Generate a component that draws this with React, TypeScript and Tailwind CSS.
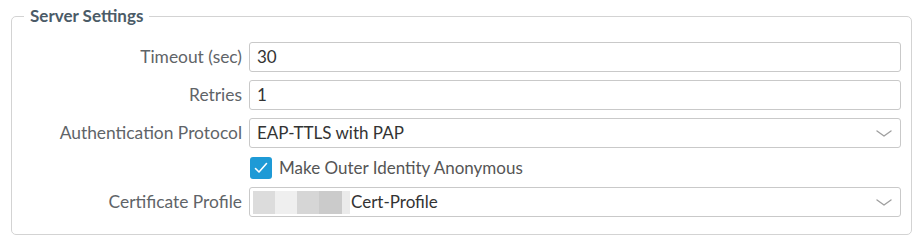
import React from "react";

const font = "font-['Lato','Open_Sans',sans-serif]";

function Chevron() {
    return (
        <svg width="16" height="7" viewBox="0 0 16 7" fill="none">
            <polyline points="1,1 8,6 15,1" stroke="#a0a0a0" strokeWidth="1.4" strokeLinecap="round" strokeLinejoin="round" />
        </svg>
    );
}

function Label({ children }: { children: React.ReactNode }) {
    return <div className="flex items-center justify-end text-[17.4px] text-[#5f6468]">{children}</div>;
}

function TextInput({ value }: { value: string }) {
    return (
        <div className="h-[30px] flex items-center px-[7px] border border-[#c9c9c9] rounded-[3px] bg-white text-[17px] text-[#333]">
            {value}
        </div>
    );
}

function Select({ children }: { children: React.ReactNode }) {
    return (
        <div className="h-[30px] flex items-stretch border border-[#c9c9c9] rounded-[3px] bg-white text-[17px] text-[#333]">
            <div className="flex-1 flex items-center">{children}</div>
            <div className="w-[33px] flex items-center justify-center">
                <Chevron />
            </div>
        </div>
    );
}

export default function App() {
    return (
        <div className={`w-[919px] h-[244px] bg-white pt-[6px] pl-[11px] ${font}`}>
            <fieldset className="w-[901px] h-[229px] border border-[#d3d3d3] rounded-[5px] pt-4 pr-[10px]">
                <legend className="ml-[12px] px-[6px] text-[17px] leading-[20px] font-bold text-[#4b5b67]">
                    Server Settings
                </legend>

                <div className="grid grid-cols-[230px_1fr] gap-x-[7px] gap-y-2">
                    <Label>Timeout (sec)</Label>
                    <TextInput value="30" />

                    <Label>Retries</Label>
                    <TextInput value="1" />

                    <Label>Authentication Protocol</Label>
                    <Select>
                        <span className="pl-[7px]">EAP-TTLS with PAP</span>
                    </Select>

                    <div />
                    <div className="h-[23px] flex items-end gap-[7px] pl-px">
                        <span className="w-[22px] h-[22px] rounded-[3px] bg-[#1e9ad6] flex items-center justify-center">
                            <svg width="14" height="12" viewBox="0 0 14 12" fill="none">
                                <polyline points="1.5,6.5 5,10 12.5,1.5" stroke="#fff" strokeWidth="1.6" strokeLinecap="round" strokeLinejoin="round" />
                            </svg>
                        </span>
                        <span className="text-[17px] text-[#555] leading-[22px]">Make Outer Identity Anonymous</span>
                    </div>

                    <Label>Certificate Profile</Label>
                    <Select>
                        {/* redacted prefix */}
                        <div className="flex h-[23px] ml-[3px]">
                            <span className="w-[22px] bg-[#dcdcdc]" />
                            <span className="w-[22px] bg-[#efefef]" />
                            <span className="w-[22px] bg-[#d6d6d6]" />
                            <span className="w-[23px] bg-[#cbcbcb]" />
                            <span className="w-[8px] bg-[#ebebeb]" />
                        </div>
                        <span className="pl-px">Cert-Profile</span>
                    </Select>
                </div>
            </fieldset>
        </div>
    );
}
